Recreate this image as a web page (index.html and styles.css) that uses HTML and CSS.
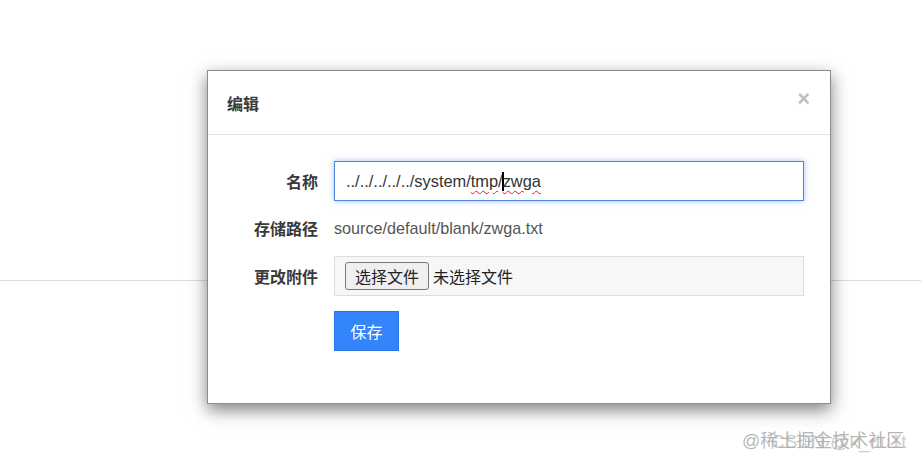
FILE: index.html
```html
<!DOCTYPE html>
<html>
	<head>
		<meta charset="UTF-8">
		<title>编辑</title>
		<link rel="stylesheet" href="styles.css">
	</head>
	<body>
		<div class="page"></div>

		<div class="modal">
			<div class="modal-header">
				<h4 class="modal-title">编辑</h4>
				<span class="close">&times;</span>
			</div>
			<form class="modal-body">
				<div class="row">
					<label>名称</label>
					<div class="input focus">../../../../../system/<span class="typo">tmp</span>/<span class="caret"></span><span class="typo">zwga</span></div>
				</div>
				<div class="row text-row">
					<label>存储路径</label>
					<span class="static">source/default/blank/zwga.txt</span>
				</div>
				<div class="row">
					<label>更改附件</label>
					<div class="file">
						<span class="file-btn">选择文件</span>
						<span class="file-name">未选择文件</span>
					</div>
				</div>
				<div class="row">
					<label></label>
					<button type="button" class="btn-save">保存</button>
				</div>
			</form>
		</div>

		<div class="mark mark-juejin">@稀土掘金技术社区</div>
		<div class="mark mark-csdn">CSDN @k_du1t</div>
	</body>
</html>
```

FILE: styles.css
```css
body {
    margin: 0;
    font-family: "Liberation Sans", "Noto Sans CJK SC", sans-serif;
    font-size: 16px;
    color: #333;
    background: #fff;
    height: 461px;
    overflow: hidden;
}

.page {
    height: 280px;
    border-bottom: 1px solid #dcdcdc;
}

.modal {
    position: absolute; top: 70px; left: 207px;
    width: 622px;
    background: #fff;
    border: 1px solid rgba(0, 0, 0, .45);
    box-shadow: 0 6px 16px rgba(0, 0, 0, .5);
}

.modal-header {
    display: flex;
    align-items: center;
    justify-content: space-between;
    height: 63px;
    padding: 0 20px 0 19px;
    border-bottom: 1px solid #e5e5e5;
}

.modal-title {
    margin: 0;
    font-size: 16px;
    font-weight: bold;
    color: #3a3a3a;
}

.close {
    font-size: 22px;
    font-weight: bold;
    color: #000;
    opacity: .25;
    line-height: 1;
    margin-top: -8px;
}

.modal-body {
    margin: 0;
    padding: 26px 26px 52px 20px;
    display: flex;
    flex-direction: column;
    gap: 15px;
}

.row {
    display: flex;
    align-items: center;
    gap: 16px;
}

.row label {
    width: 90px;
    flex: none;
    text-align: right;
    font-weight: bold;
    color: #3a3a3a;
}

.text-row {
    height: 24px;
    margin-bottom: 1px;
}

.input {
    flex: 1;
    box-sizing: border-box;
    height: 40px;
    padding: 0 11px;
    display: flex;
    align-items: center;
    white-space: pre;
    font-size: 16.4px;
    color: #333;
    border: 1px solid #ccc;
}

.input.focus {
    border-color: #4f84d6;
    box-shadow: 0 0 6px rgba(102, 153, 245, .6);
}

.typo {
    text-decoration: underline wavy #e02020;
    text-decoration-thickness: 1px;
    text-underline-offset: 3px;
}

.caret {
    display: inline-block;
    width: 2px;
    height: 19px;
    background: #000;
    margin: 0 -1px 0 -1px;
}

.static {
    color: #555;
    font-size: 16.2px;
}

.file {
    flex: 1;
    box-sizing: border-box;
    height: 40px;
    padding: 0 10px;
    display: flex;
    align-items: center;
    gap: 4px;
    background: #f7f7f7;
    border: 1px solid #ddd;
}

.file-btn {
    box-sizing: border-box;
    height: 28px;
    padding: 0 9px;
    display: flex;
    align-items: center;
    background: #efefef;
    border: 1px solid #777;
    border-radius: 3px;
    color: #222;
}

.file-name {
    color: #222;
}

.btn-save {
    width: 65px;
    height: 40px;
    font-family: inherit;
    font-size: 16px;
    color: #fff;
    background: #3484fb;
    border: 1px solid #2a74e0;
    border-radius: 0;
}

.mark {
    position: absolute;
    font-size: 18px;
    white-space: nowrap;
}

.mark-juejin {
    left: 742px; top: 426px;
    color: rgba(150, 150, 150, .7);
}

.mark-csdn {
    left: 771px; top: 431px;
    font-size: 19px;
    color: rgba(175, 175, 175, .65);
}
```
